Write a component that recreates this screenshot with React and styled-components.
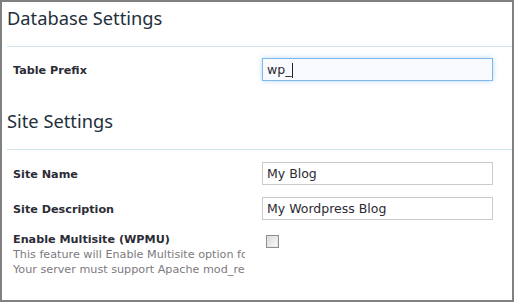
import React from 'react';
import styled, { createGlobalStyle } from 'styled-components';

const GlobalStyle = createGlobalStyle`
    html, body {
        margin: 0;
        padding: 0;
        background: #fff;
    }
`;

const Frame = styled.div`
    box-sizing: border-box;
    width: 514px;
    height: 302px;
    border: 2px solid #808080;
    background: #fff;
    overflow: hidden;
    font-family: "DejaVu Sans", Verdana, sans-serif;
`;

const SectionHeader = styled.div`
    box-sizing: border-box;
    height: 45px;
    margin: ${p => p.$top || 0}px 0 0 5px;
    padding-top: 4px;
    border-bottom: 1px solid #d2e5ef;
`;

const SectionTitle = styled.h2`
    margin: 0;
    font-family: "Noto Sans", "Open Sans", sans-serif;
    font-size: 18.3px;
    line-height: 24px;
    font-weight: 400;
    color: #23303c;
`;

const Row = styled.div`
    display: grid;
    grid-template-columns: 249px 231px;
    align-items: ${p => (p.$top ? 'start' : 'center')};
    margin-top: ${p => p.$gap}px;
    padding-left: 11px;
`;

const LabelCell = styled.div`
    width: 232px;
    overflow: hidden;
    white-space: nowrap;
`;

const Label = styled.div`
    font-size: 11.2px;
    line-height: ${p => (p.$tight ? 14 : 15)}px;
    font-weight: 700;
    color: #2c2c36;
    padding-top: ${p => (p.$tight ? 0 : 2)}px;
`;

const Hint = styled.div`
    font-size: 11.2px;
    line-height: 15px;
    color: #7d7a80;
`;

const TextBox = styled.div`
    box-sizing: border-box;
    height: 23px;
    padding: 0 4px;
    display: flex;
    align-items: center;
    font-size: 12.5px;
    color: #2a2a33;
    background: ${p => (p.$focused ? '#f8fafd' : '#fff')};
    border: 1px solid ${p => (p.$focused ? '#7db9ec' : '#cbcbcb')};
    box-shadow: ${p => (p.$focused ? '0 0 5px rgba(125, 185, 236, 0.55)' : 'none')};
`;

const Caret = styled.span`
    display: inline-block;
    width: 1px;
    height: 15px;
    margin-left: 1px;
    background: #222;
    position: relative;
    top: 1px;
`;

const Check = styled.span`
    display: block;
    box-sizing: border-box;
    width: 13px;
    height: 13px;
    margin: 2px 0 0 4px;
    border: 1px solid #8e8e8e;
    background: linear-gradient(135deg, #d8d8d8 0%, #f2f2f2 70%, #fff 100%);
    box-shadow: inset 0 0 0 1px #e6e6e6;
`;

const Field = ({ value, focused }) => (
    <TextBox $focused={focused}>
        {value}
        {focused && <Caret />}
    </TextBox>
);

const App = () => {
    return (
        <>
            <GlobalStyle />
            <Frame>
                <SectionHeader>
                    <SectionTitle>Database Settings</SectionTitle>
                </SectionHeader>
                <Row $gap={11}>
                    <LabelCell><Label>Table Prefix</Label></LabelCell>
                    <Field value="wp_" focused />
                </Row>

                <SectionHeader $top={24}>
                    <SectionTitle>Site Settings</SectionTitle>
                </SectionHeader>
                <Row $gap={12}>
                    <LabelCell><Label>Site Name</Label></LabelCell>
                    <Field value="My Blog" />
                </Row>
                <Row $gap={12}>
                    <LabelCell><Label>Site Description</Label></LabelCell>
                    <Field value="My Wordpress Blog" />
                </Row>
                <Row $gap={13} $top>
                    <LabelCell>
                        <Label $tight>Enable Multisite (WPMU)</Label>
                        <Hint>This feature will Enable Multisite option for your WordPress install.</Hint>
                        <Hint>Your server must support Apache mod_rewrite.</Hint>
                    </LabelCell>
                    <div><Check role="checkbox" aria-checked="false" /></div>
                </Row>
            </Frame>
        </>
    );
};

export default App;
